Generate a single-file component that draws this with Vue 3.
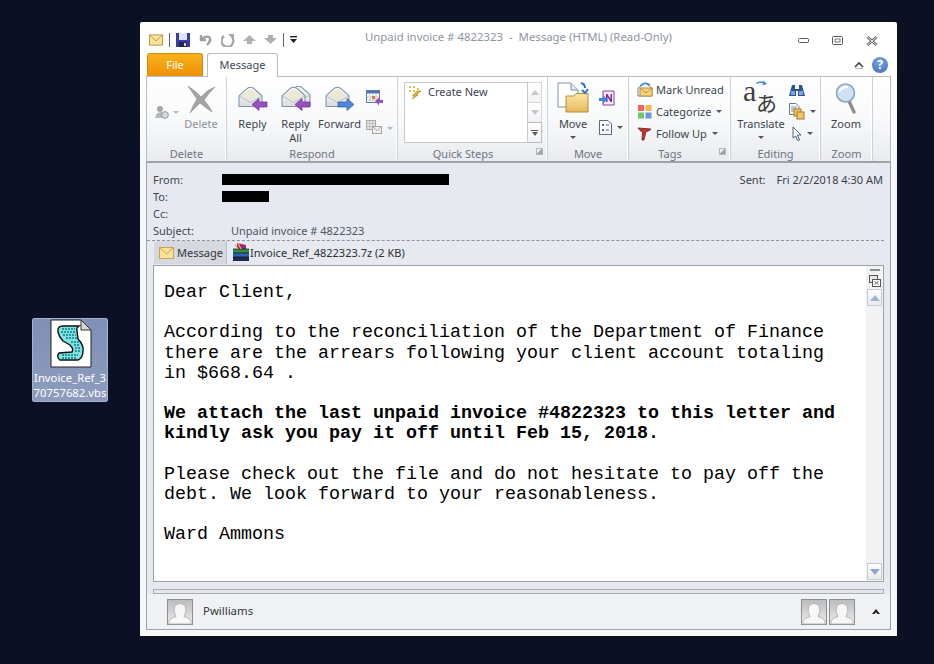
<template>
  <div class="desktop">
    <svg width="0" height="0" class="defs">
      <defs>
        <linearGradient id="envFill" x1="0" y1="0" x2="0" y2="1">
          <stop offset="0" stop-color="#ffffff" />
          <stop offset="1" stop-color="#d9dcd8" />
        </linearGradient>
        <linearGradient id="avatarBg" x1="0" y1="0" x2="0" y2="1">
          <stop offset="0" stop-color="#b9bbbc" />
          <stop offset="1" stop-color="#ecedee" />
        </linearGradient>
        <linearGradient id="folderFill" x1="0" y1="0" x2="0" y2="1">
          <stop offset="0" stop-color="#fbe6a6" />
          <stop offset="1" stop-color="#e6b95c" />
        </linearGradient>
        <symbol id="mail" viewBox="0 0 30 28">
          <path d="M1 12 L11 3 Q15 0 19 3 L29 12 V25 H1 Z" fill="url(#envFill)" stroke="#7d93ad" stroke-width="1.3" />
          <path d="M4 12 L12 5 Q15 3 18 5 L26 12 L15 18 Z" fill="#ebe8d6" />
          <path d="M1 12 L15 20 L29 12" fill="none" stroke="#a6b5c6" stroke-width="1" />
        </symbol>
        <symbol id="avatar" viewBox="0 0 26 26">
          <rect x="0.5" y="0.5" width="25" height="25" fill="url(#avatarBg)" stroke="#8c8e90" />
          <path d="M2 25 V22 Q3 19 9 17.5 Q6 13 7.5 8 Q9 4.5 13 4.5 Q17 4.5 18.5 8 Q20 13 17 17.5 Q23 19 24 22 V25 Z" fill="#f7f7f7" stroke="#a5a7a9" stroke-width="0.8" />
        </symbol>
      </defs>
    </svg>

    <div class="file-icon">
      <svg class="script-page" width="42" height="49" viewBox="0 0 42 49">
        <path d="M1 1 H31 L41 11 V48 H1 Z" fill="#fff" stroke="#222" stroke-width="1" />
        <path d="M31 1 V11 H41 Z" fill="#d8d8d8" stroke="#333" stroke-width="1" />
        <path d="M8 13 Q7 7 13 7 H29 Q26 9 27 12 L28 20 Q34 26 33 32 Q33 39 28 41 H10 Q6 38 9 34 L22 33 Q24 30 20 26 L13 22 Q9 18 8 13 Z" fill="#7fe3e1" stroke="#111" stroke-width="1.4" />
        <path d="M12 10 H25 M11 13 H25 M13 16 H26 M16 19 H27 M21 23 H29 M24 26 H30 M25 29 H31 M25 32 H31 M12 36 H28 M12 39 H26" stroke="#0d7c8c" stroke-width="1.3" stroke-dasharray="2 1" />
      </svg>
      <span class="file-name">Invoice_Ref_3<br />70757682.vbs</span>
    </div>

    <main class="window">
      <header class="titlebar">
        <div class="qat">
          <svg width="14" height="12" viewBox="0 0 15 12"><rect x="0.5" y="0.5" width="14" height="11" fill="#fbe29a" stroke="#b8923f" /><path d="M1 1 L7.5 7 L14 1" fill="none" stroke="#c29a45" /></svg>
          <i class="qat-sep"></i>
          <svg width="14" height="14" viewBox="0 0 14 14"><rect width="14" height="14" fill="#3a3f9c" /><rect x="3" y="0" width="8" height="7" fill="#dfe3f2" /><rect x="3" y="9" width="8" height="5" fill="#23264f" /><rect x="8" y="10" width="2" height="3" fill="#cfd3e8" /></svg>
          <svg width="15" height="14" viewBox="0 0 15 14"><path d="M3 2 V7 H8 M3.5 6.5 Q7 2.5 11 4 Q14 7 9 12" fill="none" stroke="#9c9fa3" stroke-width="2.4" /></svg>
          <svg width="14" height="14" viewBox="0 0 14 14"><path d="M3 3 A6 6 0 1 0 11 4" fill="none" stroke="#a5a8ac" stroke-width="2.4" /><path d="M7 1 H13 V7 Z" fill="#a5a8ac" /></svg>
          <svg width="13" height="9" viewBox="0 0 13 9"><path d="M6.5 0 L13 6 H9 V9 H4 V6 H0 Z" fill="#adb0b4" /></svg>
          <svg width="13" height="9" viewBox="0 0 13 9"><path d="M6.5 9 L13 3 H9 V0 H4 V3 H0 Z" fill="#adb0b4" /></svg>
          <i class="qat-sep"></i>
          <svg width="8" height="7" viewBox="0 0 8 7"><rect y="0" width="7" height="1.4" fill="#222" /><path d="M0 3 H7 L3.5 7 Z" fill="#222" /></svg>
        </div>
        <div class="title">Unpaid invoice # 4822323&nbsp; -&nbsp; Message (HTML) (Read-Only)</div>
        <div class="winbtns">
          <svg width="11" height="6" viewBox="0 0 11 6"><rect x="0.5" y="0.5" width="10" height="4" rx="1" fill="#fff" stroke="#55595f" /></svg>
          <svg width="11" height="9" viewBox="0 0 11 9"><rect x="0.5" y="0.5" width="10" height="8" rx="1" fill="#fff" stroke="#55595f" /><rect x="3" y="3" width="5" height="3" fill="#fff" stroke="#55595f" stroke-width="0.8" /></svg>
          <svg width="12" height="10" viewBox="0 0 12 10"><path d="M1.5 1 L10.5 9 M10.5 1 L1.5 9" stroke="#5c6067" stroke-width="2.6" /><path d="M1.5 1 L10.5 9 M10.5 1 L1.5 9" stroke="#eceef0" stroke-width="1" /></svg>
        </div>
      </header>

      <nav class="tabs">
        <div class="tab-file">File</div>
        <div class="tab-message">Message</div>
        <div class="tab-right">
          <svg width="10" height="8" viewBox="0 0 10 8"><path d="M1 6 L5 2 L9 6" fill="none" stroke="#444" stroke-width="1.6" /><path d="M1 7.5 H9" stroke="#bbb" /></svg>
          <span class="help">?</span>
        </div>
      </nav>

      <section class="ribbon">
        <div class="group g-delete">
          <div class="group-body">
            <div class="ignore">
              <svg width="16" height="14" viewBox="0 0 16 14"><circle cx="6" cy="4" r="3" fill="#a5a7a9" /><path d="M1 13 Q2 7 7 7 Q11 7 12 13 Z" fill="#b5b7b9" /><circle cx="11" cy="10" r="3.4" fill="#d5d6d8" stroke="#9a9c9f" /></svg>
              <i class="caret gray"></i>
            </div>
            <div class="big">
              <span class="big-icon">
                <svg width="30" height="30" viewBox="0 0 30 30"><path d="M2 2 Q11 8 15 13 Q22 5 29 3 Q22 10 18 16 Q24 23 26 28 Q20 24 14 19 Q9 24 4 29 Q7 21 11 15 Q6 8 2 2 Z" fill="#a2a4a6" stroke="#8d8f91" stroke-width="0.6" /></svg>
              </span>
              <span class="big-label muted">Delete</span>
            </div>
          </div>
          <div class="group-label">Delete</div>
        </div>

        <div class="group g-respond">
          <div class="group-body">
            <div class="big">
              <span class="big-icon">
                <svg width="30" height="28" viewBox="0 0 30 28"><use href="#mail" width="25" height="23" /><path d="M14 18.5 L21 12.5 V16 H29 V21 H21 V24.5 Z" fill="#9a4fc0" stroke="#6f2d95" stroke-width="0.7" /></svg>
              </span>
              <span class="big-label">Reply</span>
            </div>
            <div class="big">
              <span class="big-icon">
                <svg width="30" height="28" viewBox="0 0 30 28"><use href="#mail" x="5" y="-1" width="25" height="23" /><use href="#mail" width="25" height="23" /><path d="M14 18.5 L21 12.5 V16 H29 V21 H21 V24.5 Z" fill="#9a4fc0" stroke="#6f2d95" stroke-width="0.7" /></svg>
              </span>
              <span class="big-label">Reply<br />All</span>
            </div>
            <div class="big g-forward">
              <span class="big-icon">
                <svg width="30" height="28" viewBox="0 0 30 28"><use href="#mail" width="25" height="23" /><path d="M29 18.5 L22 12.5 V16 H13 V21 H22 V24.5 Z" fill="#4f86d8" stroke="#2a5ea8" stroke-width="0.7" /></svg>
              </span>
              <span class="big-label">Forward</span>
            </div>
            <div class="small-col respond-small">
              <svg width="17" height="16" viewBox="0 0 17 16"><rect x="0.5" y="0.5" width="13" height="12" fill="#fff" stroke="#5f7fa8" /><rect x="0.5" y="0.5" width="13" height="3" fill="#4f74b0" /><path d="M4 4 V12 M7 4 V12 M10 4 V12 M1 7 H13 M1 10 H13" stroke="#a9b8cc" stroke-width="0.7" /><rect x="6" y="6" width="3" height="3" fill="#e8792b" /><path d="M9 11 L13 7.5 V10 H17 V13 H13 V15.5 Z" fill="#9a4fc0" /></svg>
              <div class="small-gray">
                <svg width="16" height="16" viewBox="0 0 16 16"><rect x="0.5" y="0.5" width="9" height="9" fill="#e6e6e6" stroke="#a8a8a8" /><path d="M3.5 1 V9 M6.5 1 V9 M1 3.5 H9 M1 6.5 H9" stroke="#b4b4b4" stroke-width="0.7" /><rect x="6.5" y="6.5" width="9" height="7" fill="#f0f0f0" stroke="#a4a4a4" /><path d="M7 7 L11 10.5 L15 7" fill="none" stroke="#aaa" /></svg>
                <i class="caret gray"></i>
              </div>
            </div>
          </div>
          <div class="group-label">Respond</div>
        </div>

        <div class="group g-quick">
          <div class="group-body">
            <div class="quick-list">
              <div class="quick-item">
                <svg width="14" height="14" viewBox="0 0 14 14"><path d="M1 1 H3 V3 H1 Z M5 1 H7 V3 H5 Z M1 5 H3 V7 H1 Z M5 5 H7 V7 H5 Z M9 3 H11 V5 H9 Z" fill="#eac04c" /><path d="M9 6 L13 6 L8 10 L10 10 L4 14 L6.5 10.5 L4.5 10.5 Z" fill="#e8b43a" stroke="#8b6a1e" stroke-width="0.5" /></svg>
                <span>Create New</span>
              </div>
            </div>
            <div class="quick-scroll">
              <span class="qs-btn"><i class="tri up"></i></span>
              <span class="qs-btn"><i class="tri down"></i></span>
              <span class="qs-btn more"><b></b><i class="tri down dark"></i></span>
            </div>
          </div>
          <div class="group-label with-launcher">Quick Steps<i class="launcher"></i></div>
        </div>

        <div class="group g-move">
          <div class="group-body">
            <div class="big">
              <span class="big-icon">
                <svg width="33" height="32" viewBox="0 0 33 32"><path d="M1 1 H14 L21 8 V25 H1 Z" fill="#fff" stroke="#7c93b3" /><path d="M14 1 V8 H21" fill="#dfe6f0" stroke="#7c93b3" /><path d="M9 14 H17 L19 11.5 H31 V30 H9 Z" fill="url(#folderFill)" stroke="#b38a3a" /><path d="M24 1 Q28 2 28 6 M25 8 L28 11 L31 7" fill="none" stroke="#2f74c6" stroke-width="2" /></svg>
              </span>
              <span class="big-label">Move</span>
              <i class="caret dark"></i>
            </div>
            <div class="small-col">
              <svg width="16" height="16" viewBox="0 0 16 16"><path d="M4 1 H15 V15 H4 Z" fill="#f6eefb" stroke="#8a3fa8" /><path d="M7 12 V4 H8.5 L11.5 9 V4 H13 V12 H11.5 L8.5 7 V12 Z" fill="#7b2c9c" /><path d="M0 8 H4 V5 L8 9.5 L4 14 V11 H0 Z" fill="#3f84d8" /></svg>
              <div class="small-gray">
                <svg width="13" height="15" viewBox="0 0 13 15"><path d="M0.5 0.5 H9 L12.5 4 V14.5 H0.5 Z" fill="#fbfcfd" stroke="#5a6a80" /><path d="M3 4 H5 V6 H3 Z M3 9 H5 V11 H3 Z" fill="#56687f" /><path d="M6.5 5 H10 M6.5 10 H10" stroke="#56687f" /></svg>
                <i class="caret dark"></i>
              </div>
            </div>
          </div>
          <div class="group-label">Move</div>
        </div>

        <div class="group g-tags">
          <div class="group-body tags-list">
            <div class="tag-row">
              <svg width="16" height="15" viewBox="0 0 16 15"><path d="M1 6 L8 1 L15 6 V14 H1 Z" fill="#fbfbf7" stroke="#6f87a3" /><rect x="3" y="6" width="12" height="8" fill="#f5d67a" stroke="#b98f3d" /><path d="M3 6 L9 11 L15 6" fill="none" stroke="#b98f3d" /><path d="M3 4 Q8 -1 13 3" fill="none" stroke="#3f84d8" stroke-width="1.4" /></svg>
              <span>Mark Unread</span>
            </div>
            <div class="tag-row">
              <svg width="16" height="15" viewBox="0 0 16 15"><rect x="1" y="1" width="6" height="6" fill="#f2635f" /><rect x="8.5" y="1" width="6" height="6" fill="#f5b94a" /><rect x="1" y="8.5" width="6" height="6" fill="#6cc464" /><rect x="8.5" y="8.5" width="6" height="6" fill="#6b96dc" /></svg>
              <span>Categorize</span><i class="caret dark"></i>
            </div>
            <div class="tag-row">
              <svg width="16" height="15" viewBox="0 0 16 15"><path d="M1 2 L14 3 Q11 6 9 5.5 L7 14 L5 14 L5.5 6 Q3 5 1 2 Z" fill="#c8322b" stroke="#6f1d22" stroke-width="0.8" /></svg>
              <span>Follow Up</span><i class="caret dark"></i>
            </div>
          </div>
          <div class="group-label with-launcher">Tags<i class="launcher"></i></div>
        </div>

        <div class="group g-editing">
          <div class="group-body">
            <div class="big translate">
              <span class="big-icon">
                <span class="translate-glyphs"><b class="latin">a</b><b class="kana">あ</b></span>
                <svg class="translate-arrow" width="12" height="6" viewBox="0 0 12 6"><path d="M1 3 Q5 0 9 2 L8 0 L12 4 L7 5.5 L8.5 3.5 Q5 2 2 4 Z" fill="#3f84d8" /></svg>
              </span>
              <span class="big-label">Translate</span>
              <i class="caret dark"></i>
            </div>
            <div class="small-col editing-small">
              <svg width="16" height="13" viewBox="0 0 16 13"><path d="M3 1 H6 V5 H10 V1 H13 L16 12 H9 V7 H7 V12 H0 Z" fill="#2d5590" /><rect x="2" y="7" width="4" height="4" fill="#7da5dc" /><rect x="10" y="7" width="4" height="4" fill="#7da5dc" /></svg>
              <div class="small-gray">
                <svg width="16" height="17" viewBox="0 0 16 17"><path d="M0.5 0.5 H7 L10 3.5 V11.5 H0.5 Z" fill="#f8f9fb" stroke="#6b7a90" /><path d="M2 4 H8 M2 6 H8 M2 8 H8" stroke="#6b7a90" stroke-width="0.8" /><rect x="5" y="6" width="7" height="7" fill="#f3c861" stroke="#a5782a" /><rect x="8" y="9" width="7" height="7" fill="#f3c861" stroke="#a5782a" /></svg>
                <i class="caret dark"></i>
              </div>
              <div class="small-gray cursor">
                <svg width="10" height="15" viewBox="0 0 10 15"><path d="M1 1 L9 9 H5.5 L7.5 14 L5.5 14.5 L3.8 10 L1 12 Z" fill="#fff" stroke="#4a5f85" /></svg>
                <i class="caret dark"></i>
              </div>
            </div>
          </div>
          <div class="group-label">Editing</div>
        </div>

        <div class="group g-zoom">
          <div class="group-body">
            <div class="big">
              <span class="big-icon">
                <svg width="22" height="31" viewBox="0 0 22 31"><path d="M14 18 L19 29" stroke="#8b8d8f" stroke-width="3.4" stroke-linecap="round" /><circle cx="10.5" cy="10" r="9" fill="#cfe0f2" stroke="#8fa4bb" stroke-width="1.6" /><path d="M4 9 Q6 4 13 4" fill="none" stroke="#fff" stroke-width="2" /></svg>
              </span>
              <span class="big-label">Zoom</span>
            </div>
          </div>
          <div class="group-label">Zoom</div>
        </div>
      </section>

      <section class="content">
        <div class="meta">
          <div class="meta-row">
            <span class="meta-key">From:</span>
            <span class="redact from"></span>
            <span class="sent"><span class="sent-key">Sent:</span>Fri 2/2/2018 4:30 AM</span>
          </div>
          <div class="meta-row">
            <span class="meta-key">To:</span>
            <span class="redact to"></span>
          </div>
          <div class="meta-row"><span class="meta-key">Cc:</span></div>
          <div class="meta-row">
            <span class="meta-key">Subject:</span>
            <span class="subject">Unpaid invoice # 4822323</span>
          </div>
        </div>

        <div class="attachments">
          <div class="att-message">
            <svg width="15" height="12" viewBox="0 0 15 12"><rect x="0.5" y="0.5" width="14" height="11" fill="#fbe29a" stroke="#c9a551" /><path d="M1 1 L7.5 7 L14 1" fill="none" stroke="#c9a551" /></svg>
            <span>Message</span>
          </div>
          <div class="att-file">
            <svg width="18" height="18" viewBox="0 0 18 18"><path d="M5 0 L14 2 L14 7 L5 6 Z" fill="#a2267a" /><path d="M1 6 H17 V10 H1 Z" fill="#2f8e46" /><path d="M1 10 H17 V14 H1 Z" fill="#2b63b5" /><path d="M1 14 H17 V18 H1 Z" fill="#1e2b4f" /><path d="M1 6 H17 M1 10 H17 M1 14 H17" stroke="#111" stroke-width="0.7" /><path d="M3 1 L6 6 M6 0 L9 6" stroke="#e6b94e" stroke-width="1.2" /></svg>
            <span>Invoice_Ref_4822323.7z (2 KB)</span>
          </div>
        </div>

        <div class="reader">
          <article class="mail-body">
            <p>Dear Client,</p>
            <p>According to the reconciliation of the Department of Finance<br />there are the arrears following your client account totaling<br />in $668.64 .</p>
            <p class="strong">We attach the last unpaid invoice #4822323 to this letter and<br />kindly ask you pay it off until Feb 15, 2018.</p>
            <p>Please check out the file and do not hesitate to pay off the<br />debt. We look forward to your reasonableness.</p>
            <p>Ward Ammons</p>
          </article>
          <aside class="scrollbar">
            <i class="split-grip"></i>
            <svg class="pane-icon" width="12" height="12" viewBox="0 0 12 12"><rect x="0.5" y="0.5" width="8" height="7" fill="#e8e8e8" stroke="#555" /><rect x="3.5" y="4.5" width="8" height="7" fill="#fff" stroke="#555" /><path d="M5.5 6.5 L9.5 9.5 M9.5 6.5 L5.5 9.5" stroke="#777" /></svg>
            <span class="sb-btn"><i class="tri up blue"></i></span>
            <span class="sb-track"></span>
            <span class="sb-btn"><i class="tri down blue"></i></span>
          </aside>
        </div>

        <div class="pane-gap"></div>
        <div class="people-split"></div>
        <footer class="people">
          <svg width="26" height="26"><use href="#avatar" /></svg>
          <span class="people-name">Pwilliams</span>
          <span class="people-right">
            <svg width="26" height="26"><use href="#avatar" /></svg>
            <svg width="26" height="26"><use href="#avatar" /></svg>
            <svg class="people-caret" width="8" height="6" viewBox="0 0 8 6"><path d="M4 0 L8 5 H5.5 L4 3.2 L2.5 5 H0 Z" fill="#222" /></svg>
          </span>
        </footer>
      </section>
    </main>
  </div>
</template>

<script setup>
</script>

<style>
html, body { margin: 0; background: #0c1024; }
</style>

<style scoped>
.desktop {
  position: relative;
  width: 934px;
  height: 664px;
  overflow: hidden;
  background: #0c1024;
  font-family: "Noto Sans", "Liberation Sans", sans-serif;
  font-size: 11px;
  color: #3c4350;
}
.defs { position: absolute; }

.file-icon {
  position: absolute;
  left: 32px;
  top: 318px;
  width: 76px;
  height: 84px;
  box-sizing: border-box;
  border: 1px solid #a4b4d2;
  border-radius: 2px;
  background: linear-gradient(#7f90b4, #8d9cbe);
  display: flex;
  flex-direction: column;
  align-items: center;
  color: #fff;
}
.script-page { margin-left: 1px; flex: none; }
.file-name { margin-top: 2px; text-align: center; line-height: 15px; font-size: 11.3px; white-space: nowrap; }

.window {
  position: absolute;
  left: 140px;
  top: 22px;
  width: 757px;
  height: 614px;
  box-sizing: border-box;
  padding: 0 6px 6px;
  background: linear-gradient(#ffffff 0, #ffffff 50px, #f6f7f8 140px);
  border-radius: 2px 2px 0 0;
  display: flex;
  flex-direction: column;
}

.titlebar {
  height: 31px;
  flex: none;
  display: flex;
  align-items: center;
  position: relative;
}
.qat { display: flex; align-items: center; gap: 8px; padding-left: 3px; margin-top: 4px; }
.qat-sep { width: 1px; height: 14px; background: #5f6368; margin: 0 -2px; }
.title {
  position: absolute;
  left: 219px;
  top: 7px;
  color: #8d949d;
  font-size: 11.4px;
  white-space: nowrap;
}
.winbtns { margin-left: auto; display: flex; align-items: center; gap: 23px; padding-right: 13px; margin-top: 6px; }

.tabs { height: 23px; flex: none; display: flex; align-items: flex-end; padding-left: 1px; }
.tab-file {
  width: 56px;
  height: 23px;
  box-sizing: border-box;
  background: linear-gradient(#f7b21c, #f08f06);
  border: 1px solid #d68a10;
  border-bottom: none;
  border-radius: 3px 3px 0 0;
  color: #fff;
  text-align: center;
  line-height: 22px;
  font-size: 11px;
}
.tab-message {
  margin-left: 4px;
  width: 71px;
  height: 24px;
  margin-bottom: -1px;
  box-sizing: border-box;
  background: #fff;
  border: 1px solid #b7bbc1;
  border-bottom: none;
  border-radius: 3px 3px 0 0;
  text-align: center;
  line-height: 22px;
  font-size: 11px;
  color: #3d4654;
  position: relative;
  z-index: 1;
}
.tab-right { margin-left: auto; display: flex; align-items: center; gap: 8px; padding-right: 3px; align-self: center; }
.help {
  width: 16px;
  height: 16px;
  border-radius: 50%;
  background: radial-gradient(circle at 50% 30%, #7ea6e0, #3a6db8);
  color: #fff;
  font-weight: 700;
  font-size: 12px;
  line-height: 16px;
  text-align: center;
}

.ribbon {
  height: 87px;
  flex: none;
  box-sizing: border-box;
  display: flex;
  background: linear-gradient(#ffffff, #f8f9fa 50%, #e9ebee);
  border: 1px solid #b9bcc1;
  border-bottom: 2px solid #9fa3a8;
}
.group {
  flex: none;
  box-sizing: border-box;
  display: flex;
  flex-direction: column;
  border-right: 1px solid #cdd0d4;
  box-shadow: inset -1px 0 0 #fff;
}
.group-body { flex: 1; display: flex; min-height: 0; }
.group-label {
  height: 16px;
  text-align: center;
  color: #6a7482;
  font-size: 11px;
  line-height: 18px;
  position: relative;
}
.with-launcher { padding-right: 19px; }
.launcher {
  position: absolute;
  right: 4px;
  top: 3px;
  width: 5px;
  height: 5px;
  border: 1px solid #b4b7bb;
  background: linear-gradient(135deg, transparent 50%, #a0a3a7 50%);
}
.g-delete { width: 80px; }
.g-delete .group-body { padding-left: 7px; }
.g-respond { width: 171px; }
.g-respond .group-body { padding-left: 4px; }
.g-quick { width: 150px; }
.g-move { width: 81px; }
.g-tags { width: 102px; }
.g-editing { width: 90px; }
.g-zoom { width: 52px; }

.ignore { width: 26px; display: flex; align-items: center; gap: 3px; height: 58px; box-sizing: border-box; margin-top: 6px; }
.big { display: flex; flex-direction: column; align-items: center; width: 43px; padding-top: 5px; box-sizing: border-box; }
.g-delete .big { width: 42px; }
.g-forward { margin-left: 1px; }
.g-move .big { width: 46px; margin-left: 2px; }
.g-zoom .big { width: 50px; }
.big-icon { height: 32px; display: flex; align-items: flex-end; justify-content: center; position: relative; flex: none; }
.big-label { margin-top: 3px; line-height: 14px; font-size: 11px; color: #3c4350; text-align: center; white-space: nowrap; }
.muted { color: #8e9297; }

.caret {
  display: inline-block;
  width: 0;
  height: 0;
  border-left: 3px solid transparent;
  border-right: 3px solid transparent;
  border-top: 3px solid #555;
  flex: none;
}
.caret.gray { border-top-color: #b4b6b9; }
.big > .caret { margin-top: 5px; }

.small-col { display: flex; flex-direction: column; align-items: flex-start; gap: 14px; padding-top: 13px; margin-left: 3px; }
.respond-small { margin-left: 5px; }
.small-gray { display: flex; align-items: center; gap: 5px; }

.quick-list {
  width: 124px;
  height: 61px;
  margin: 5px 0 0 6px;
  box-sizing: border-box;
  background: #fff;
  border: 1px solid #c6c9cd;
}
.quick-item { display: flex; align-items: center; gap: 6px; padding: 1px 0 0 3px; font-size: 11px; color: #3c4350; }
.quick-scroll { width: 14px; height: 61px; margin-top: 5px; display: flex; flex-direction: column; }
.qs-btn {
  flex: 1;
  box-sizing: border-box;
  border: 1px solid #d5d8db;
  border-left: none;
  margin-top: -1px;
  background: linear-gradient(#ffffff, #f1f2f4);
  display: flex;
  flex-direction: column;
  align-items: center;
  justify-content: center;
  gap: 1px;
}
.qs-btn:first-child { margin-top: 0; }
.qs-btn.more { border-color: #b7babe; }
.qs-btn.more b { width: 7px; height: 1px; background: #555; }
.tri { width: 0; height: 0; border-left: 4px solid transparent; border-right: 4px solid transparent; display: block; }
.tri.up { border-bottom: 5px solid #c3c6ca; }
.tri.down { border-top: 5px solid #c3c6ca; }
.tri.down.dark { border-top-color: #5a5e63; border-left-width: 3.5px; border-right-width: 3.5px; border-top-width: 4px; }
.tri.up.blue { border-left-width: 5px; border-right-width: 5px; border-bottom: 6px solid #a3b4d3; }
.tri.down.blue { border-left-width: 5px; border-right-width: 5px; border-top: 6px solid #8fa3cb; }

.tags-list { flex-direction: column; padding: 4px 0 0 8px; gap: 6px; }
.tag-row { display: flex; align-items: center; gap: 3px; height: 16px; font-size: 11px; color: #3c4350; white-space: nowrap; }
.tag-row .caret { margin-left: 2px; }

.translate { width: 60px; }
.translate-glyphs { display: block; position: relative; width: 34px; height: 30px; color: #3d3d3d; }
.latin { position: absolute; left: -1px; top: -10px; font: 400 30px "Liberation Serif", serif; }
.kana { position: absolute; left: 12px; top: 6px; font: 400 21px "Noto Sans CJK JP", sans-serif; line-height: 24px; }
.translate-arrow { position: absolute; left: 11px; top: -2px; }
.editing-small { padding-top: 7px; gap: 6px; margin-left: -2px; }
.cursor { padding-left: 3px; }

.content { flex: 1; min-height: 0; display: flex; flex-direction: column; background: #e6e9ef; border: 1px solid #9fa3a8; border-top: none; border-bottom: none; }
.meta { padding: 8px 1px 0 6px; height: 78px; box-sizing: border-box; flex: none; border-bottom: 1px dashed #8e9196; margin: 0 6px 0 0; }
.meta-row { display: flex; align-items: center; height: 17px; color: #3f4652; font-size: 11px; position: relative; }
.meta-key { width: 69px; flex: none; }
.redact { background: #000; height: 11px; display: block; margin-top: -1px; }
.redact.from { width: 227px; }
.redact.to { width: 47px; }
.sent { margin-left: auto; display: flex; white-space: nowrap; color: #3a404b; }
.sent-key { margin-right: 11px; }
.subject { margin-left: 9px; color: #4c5563; }

.attachments { height: 24px; flex: none; display: flex; align-items: stretch; padding-left: 7px; }
.att-message {
  width: 73px;
  height: 23px;
  box-sizing: border-box;
  background: #d5d8dc;
  border-right: 1px solid #bcc0c5;
  display: flex;
  align-items: center;
  gap: 3px;
  padding-left: 5px;
  font-size: 11px;
  color: #30363f;
}
.att-file { display: flex; align-items: center; gap: 0; padding-left: 5px; font-size: 11px; color: #2b2f36; white-space: nowrap; height: 22px; }

.reader {
  flex: none;
  height: 317px;
  margin: 0 6px;
  box-sizing: border-box;
  border: 1px solid #9fa3a8;
  background: #fff;
  display: flex;
}
.mail-body {
  flex: 1;
  padding: 17px 0 0 10px;
  font-family: "Liberation Mono", monospace;
  font-size: 18.33px;
  line-height: 20.17px;
  color: #000;
  white-space: nowrap;
}
.mail-body p { margin: 0 0 20.17px; }
.strong { font-weight: 700; }

.scrollbar {
  width: 17px;
  flex: none;
  background: #f0f2f4;
  display: flex;
  flex-direction: column;
  align-items: center;
  padding-top: 3px;
}
.split-grip { width: 10px; height: 2px; background: #8a8d91; flex: none; }
.pane-icon { margin-top: 4px; flex: none; }
.sb-btn {
  width: 15px;
  height: 17px;
  margin-top: 2px;
  flex: none;
  box-sizing: border-box;
  border: 1px solid #c8ccd2;
  background: linear-gradient(#ffffff, #e7e9ed);
  display: flex;
  align-items: center;
  justify-content: center;
}
.sb-track { flex: 1; }
.scrollbar .sb-btn:last-child { margin: 0 0 1px; }

.pane-gap { height: 7px; flex: none; }
.people-split { height: 5px; box-sizing: border-box; margin: 0 6px; flex: none; border: 1px solid #a8abaf; background: #e4e7ea; }
.people {
  flex: 1;
  display: flex;
  align-items: center;
  padding: 0 0 0 20px;
  background: #f0f1f3;
  border-bottom: 1px solid #9fa3a8;
  min-height: 0;
}
.people-name { margin: -3px 0 0 10px; font-size: 11.4px; color: #30363f; }
.people-right { margin-left: auto; display: flex; align-items: center; gap: 2px; padding-right: 10px; }
.people-caret { margin-left: 15px; }
</style>
